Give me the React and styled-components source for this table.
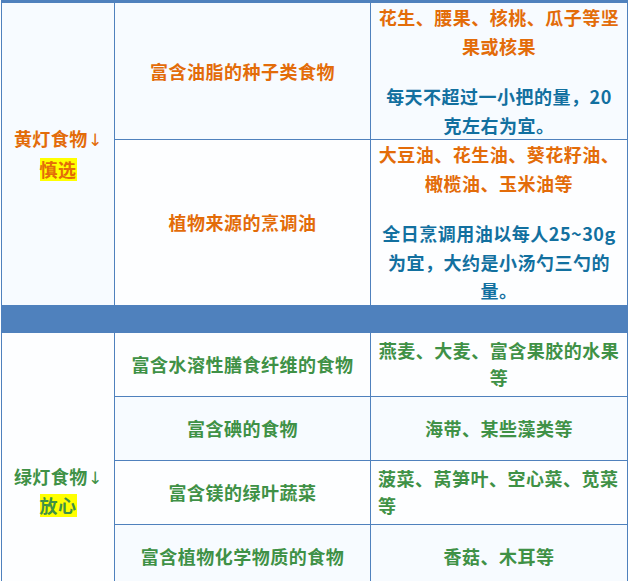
import React from 'react'
import styled, { createGlobalStyle } from 'styled-components'

const GlobalStyle = createGlobalStyle`
  html, body {
    margin: 0;
    padding: 0;
    background: #ffffff;
  }
  body {
    font-family: "Noto Sans CJK SC", "Noto Sans", sans-serif;
  }
`

const colors = {
  border: '#4f81bd',
  orange: '#e36c09',
  blue: '#12709f',
  green: '#3f9146',
  light: '#f7fbff',
  white: '#fdfeff',
}

const Table = styled.table`
  margin-left: 1px;
  width: 627px;
  table-layout: fixed;
  border-collapse: separate;
  border-spacing: 0;
  border-left: 1px solid ${colors.border};
  border-top: 3px solid ${colors.border};
  font-size: 18px;
  font-weight: 700;
  letter-spacing: 0.5px;
`

const Cell = styled.td`
  box-sizing: border-box;
  padding: 0 7px;
  border-right: 1px solid ${colors.border};
  border-bottom: 1px solid ${colors.border};
  background: ${(p) => (p.$light ? colors.light : colors.white)};
  color: ${(p) => colors[p.$tone]};
  text-align: ${(p) => p.$align || 'center'};
  vertical-align: middle;
  line-height: ${(p) => (p.$tone === 'green' ? '27px' : '28.5px')};
  height: ${(p) => (p.$h ? `${p.$h}px` : 'auto')};
`

const Band = styled.td`
  box-sizing: border-box;
  height: 27px;
  padding: 0;
  background: ${colors.border};
  border-right: 1px solid ${colors.border};
`

const Para = styled.p`
  margin: 0;
  color: ${(p) => colors[p.$tone]};
  & + & {
    margin-top: 22px;
  }
`

const Arrow = styled.span`
  font-family: "DejaVu Sans", sans-serif;
  font-weight: 400;
  font-size: 17px;
  letter-spacing: 0;
`

const Mark = styled.span`
  display: inline-block;
  background: #ffff00;
  line-height: 23px;
`

const greenRows = [
  { name: '富含水溶性膳食纤维的食物', food: '燕麦、大麦、富含果胶的水果等', light: false },
  { name: '富含碘的食物', food: '海带、某些藻类等', light: true },
  { name: '富含镁的绿叶蔬菜', food: '菠菜、莴笋叶、空心菜、苋菜等', light: false, align: 'left' },
  { name: '富含植物化学物质的食物', food: '香菇、木耳等', light: true },
  { name: '', food: '', light: false, h: 62 },
]

export default function App() {
  return (
    <>
      <GlobalStyle />
      <Table>
        <colgroup>
          <col style={{ width: 113 }} />
          <col style={{ width: 256 }} />
          <col style={{ width: 257 }} />
        </colgroup>
        <tbody>
          <tr>
            <Cell rowSpan={2} $tone="orange" $light>
              黄灯食物<Arrow>↓</Arrow>
              <br />
              <Mark>慎选</Mark>
            </Cell>
            <Cell $tone="orange" $light>富含油脂的种子类食物</Cell>
            <Cell $tone="orange" $light>
              <Para $tone="orange">花生、腰果、核桃、瓜子等坚果或核果</Para>
              <Para $tone="blue">每天不超过一小把的量，20克左右为宜。</Para>
            </Cell>
          </tr>
          <tr>
            <Cell $tone="orange">植物来源的烹调油</Cell>
            <Cell $tone="orange">
              <Para $tone="orange">大豆油、花生油、葵花籽油、橄榄油、玉米油等</Para>
              <Para $tone="blue">全日烹调用油以每人25~30g为宜，大约是小汤勺三勺的量。</Para>
            </Cell>
          </tr>
          <tr>
            <Band colSpan={3} />
          </tr>
          {greenRows.map((row, i) => (
            <tr key={i}>
              {i === 0 && (
                <Cell rowSpan={greenRows.length} $tone="green">
                  绿灯食物<Arrow>↓</Arrow>
                  <br />
                  <Mark>放心</Mark>
                </Cell>
              )}
              <Cell $tone="green" $light={row.light} $h={row.h || 64}>
                {row.name}
              </Cell>
              <Cell $tone="green" $light={row.light} $h={row.h || 64} $align={row.align}>
                {row.food}
              </Cell>
            </tr>
          ))}
        </tbody>
      </Table>
    </>
  )
}
